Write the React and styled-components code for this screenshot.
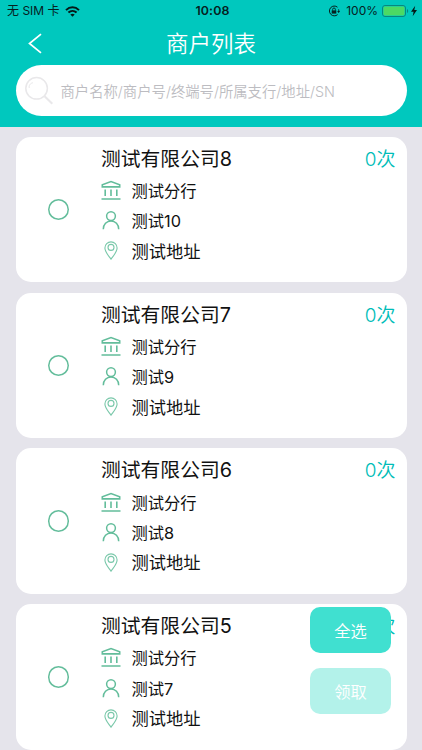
import React from 'react';
import styled, { createGlobalStyle } from 'styled-components';

const Global = createGlobalStyle`
  * { box-sizing: border-box; }
  body { margin: 0; font-family: Inter, "Noto Sans CJK SC", sans-serif; overflow: hidden; }
  button { font-family: inherit; border: 0; padding: 0; background: none; }
`;

const Screen = styled.main`
  position: relative;
  width: 422px;
  height: 750px;
  overflow: hidden;
  background: #e5e4eb;
`;

const Header = styled.header`
  height: 126.5px;
  background: #00c8be;
`;

const StatusBar = styled.div`
  display: grid;
  grid-template-columns: 1fr auto 1fr;
  align-items: center;
  height: 22px;
  padding: 0 4px 0 7px;
  font-size: 12px;
  line-height: 22px;
  color: #06211f;
`;

const StatusGroup = styled.div`
  display: flex;
  align-items: center;
  justify-content: ${(p) => (p.$end ? 'flex-end' : 'flex-start')};
  white-space: pre;
`;

const Carrier = styled.span`
  margin-right: 5.5px;
  font-size: 12px;
`;

const Clock = styled.span`
  font-size: 12.4px;
  font-weight: 600;
  letter-spacing: 0.1px;
`;

const Percent = styled.span`
  margin: 0 4px 0 6px;
`;

const NavBar = styled.div`
  display: grid;
  grid-template-columns: 70px 1fr 70px;
  align-items: center;
  height: 43px;
`;

const BackButton = styled.button`
  display: flex;
  padding-left: 27px;
`;

const Title = styled.h1`
  margin: 0;
  text-align: center;
  font-size: 22.5px;
  line-height: 43px;
  font-weight: 350;
  color: #fff;
`;

const SearchBox = styled.label`
  display: flex;
  align-items: center;
  height: 51px;
  margin: 0 15.5px;
  padding-left: 8px;
  border-radius: 26px;
  background: #fff;
`;

const Placeholder = styled.span`
  margin-left: 8px;
  font-size: 14.35px;
  font-weight: 350;
  color: #bcbcc1;
  white-space: nowrap;
`;

const List = styled.section`
  display: flex;
  flex-direction: column;
  gap: 10.3px;
  padding: 10.4px 15.5px 0;
`;

const Card = styled.article`
  display: grid;
  grid-template-columns: 85.5px 1fr auto;
  flex: none;
  height: 145.5px;
  padding-right: 11px;
  border-radius: 15px;
  background: #fff;
`;

const Radio = styled.span`
  align-self: center;
  width: 21.5px;
  height: 21.5px;
  margin-left: 32px;
  box-shadow: inset 0 0 0 1.5px #63bd9b;
  border-radius: 50%;
`;

const Details = styled.div`
  display: flex;
  flex-direction: column;
  padding-top: 7px;
`;

const Name = styled.h2`
  margin: 0;
  font-size: 19.8px;
  line-height: 31px;
  font-weight: 400;
  color: #111;
`;

const Row = styled.div`
  display: flex;
  align-items: center;
  gap: 10.5px;
  height: 30.2px;
  font-size: ${(p) => (p.$large ? '17.3px' : '16.3px')};
  color: #111;
`;

const Count = styled.span`
  padding-top: 7px;
  font-size: 19px;
  line-height: 31px;
  font-weight: 350;
  color: #00bdb8;
`;

const Actions = styled.div`
  position: absolute;
  left: 310px;
  top: 607px;
  display: flex;
  flex-direction: column;
  gap: 15px;
`;

const ActionButton = styled.button`
  width: 81px;
  height: 46px;
  padding-bottom: 1px;
  border-radius: 10px;
  font-size: 16.3px;
  font-weight: 350;
  color: #fff;
  background: ${(p) => (p.$faded ? '#b3f2ea' : '#40e0d0')};
`;

const Wifi = () => (
  <svg width="15" height="11" viewBox="0 0 15 11" fill="none" stroke="#041a18" strokeWidth="2">
    <path d="M1 4.1C4.8.4 10.2.4 14 4.1M3.4 6.6c2.4-2.2 5.8-2.2 8.2 0" />
    <path d="M5.3 8.5c1.3-1.1 3.1-1.1 4.4 0L7.5 10.8z" fill="#041a18" stroke="none" />
  </svg>
);

const RotationLock = () => (
  <svg width="12" height="12" viewBox="0 0 12 12" fill="none" stroke="#06211f">
    <path d="M9.5 2.2A4.9 4.9 0 1 0 9.6 9.6M10.6 4.4c.3 1 .3 2 .1 2.8" />
    <path d="M9.2 6.1h2.8l-1.4 2z" fill="#06211f" stroke="none" />
    <path d="M4.6 5.6V4.4a1.4 1.4 0 0 1 2.8 0v1.2" strokeWidth=".9" />
    <path d="M3.7 5.4h4.6v3.2H3.7z" fill="#06211f" stroke="none" />
  </svg>
);

const Battery = () => (
  <svg width="36" height="12" viewBox="0 0 36 12">
    <rect x=".5" y=".5" width="23" height="11" rx="2.5" fill="#00c8be" stroke="#078780" />
    <rect x="1.5" y="1.5" width="21" height="9" rx="1.4" fill="#4cd964" />
    <path d="M25 4c1.6.6 1.6 3.4 0 4z" fill="#078780" />
    <path d="M33.2.8 29 6.8h2.6l-.9 4.4L35 5.1h-2.7z" fill="#041a18" />
  </svg>
);

const BackIcon = () => (
  <svg width="16" height="21" viewBox="0 0 16 21" fill="none" stroke="#fff" strokeWidth="1.7">
    <path d="M14 1.2 2.5 10.5 14 19.8" />
  </svg>
);

const SearchIcon = () => (
  <svg width="29" height="30" viewBox="0 0 29 30" fill="none" stroke="#e9e8ea" strokeWidth="1.5">
    <circle cx="12.6" cy="12.3" r="10.8" />
    <path d="m20.3 20 8 7.8" strokeWidth="2.1" />
    <path d="M5.3 12c-.8-2.4 1.2-5 3.6-5.2" strokeWidth="1" />
  </svg>
);

const BankIcon = () => (
  <svg width="20" height="20" viewBox="0 0 20 20" fill="none" stroke="#63bd9b" strokeWidth="1.6">
    <path d="M1.3 6.9V4.8L10 1.6l8.7 3.2v2.1z" />
    <path d="M4.2 9.5v6.4M10 9.5v6.4M15.8 9.5v6.4M.5 19h19" />
  </svg>
);

const PersonIcon = () => (
  <svg width="20" height="20" viewBox="0 0 20 20" fill="none" stroke="#63bd9b" strokeWidth="1.5">
    <circle cx="10" cy="6.1" r="4.4" />
    <path d="M2.3 19.2c0-4.8 3.3-8.2 7.7-8.2s7.7 3.4 7.7 8.2" />
  </svg>
);

const PinIcon = () => (
  <svg width="20" height="20" viewBox="0 0 20 20" fill="none" stroke="#7ac8aa" strokeWidth="1.1">
    <path d="M10 19.2C7.5 15.6 3.9 11.9 3.9 8a6.1 6.1 0 0 1 12.2 0c0 3.9-3.6 7.6-6.1 11.2z" />
    <circle cx="10" cy="7.4" r="3" />
  </svg>
);

const merchants = [
  { name: '测试有限公司8', contact: '测试10' },
  { name: '测试有限公司7', contact: '测试9' },
  { name: '测试有限公司6', contact: '测试8' },
  { name: '测试有限公司5', contact: '测试7' },
];

export default function App() {
  return (
    <Screen>
      <Global />
      <Header>
        <StatusBar>
          <StatusGroup>
            <Carrier>无 SIM 卡</Carrier>
            <Wifi />
          </StatusGroup>
          <Clock>10:08</Clock>
          <StatusGroup $end>
            <RotationLock />
            <Percent>100%</Percent>
            <Battery />
          </StatusGroup>
        </StatusBar>
        <NavBar>
          <BackButton aria-label="返回"><BackIcon /></BackButton>
          <Title>商户列表</Title>
        </NavBar>
        <SearchBox>
          <SearchIcon />
          <Placeholder>商户名称/商户号/终端号/所属支行/地址/SN</Placeholder>
        </SearchBox>
      </Header>
      <List>
        {merchants.map((m) => (
          <Card key={m.name}>
            <Radio />
            <Details>
              <Name>{m.name}</Name>
              <Row><BankIcon />测试分行</Row>
              <Row><PersonIcon />{m.contact}</Row>
              <Row $large><PinIcon />测试地址</Row>
            </Details>
            <Count>0次</Count>
          </Card>
        ))}
      </List>
      <Actions>
        <ActionButton>全选</ActionButton>
        <ActionButton $faded>领取</ActionButton>
      </Actions>
    </Screen>
  );
}
